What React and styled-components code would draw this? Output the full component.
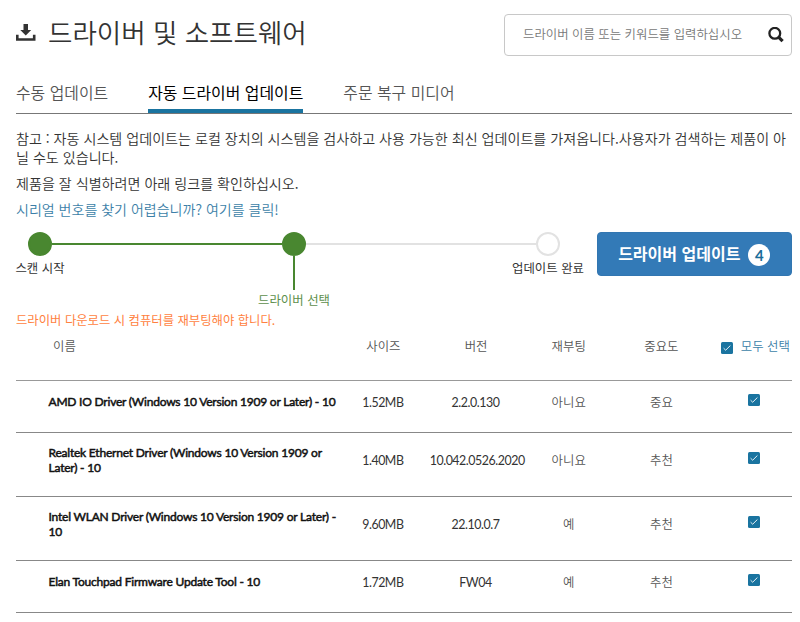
import React, { useState } from 'react';
import styled, { createGlobalStyle } from 'styled-components';

const GlobalStyle = createGlobalStyle`
  * {
    box-sizing: border-box;
  }

  body {
    margin: 0;
    background-color: #fff;
    color: #333;
    font-family: "Noto Sans CJK KR", "Noto Sans", sans-serif;
  }
`;

const Container = styled.div`
  width: 800px;
  height: 622px;
  padding: 0 8px 0 16px;
  overflow: hidden;
`;

const Header = styled.header`
  height: 73px;
  padding-top: 14px;
  display: flex;
  justify-content: space-between;
`;

const Title = styled.h1`
  height: 35px;
  margin: 0;
  display: flex;
  align-items: center;
  gap: 12px;
  font-size: 26.5px;
  font-weight: 350;
  line-height: 35px;
  white-space: nowrap;
`;

const Search = styled.div`
  width: 288px;
  height: 42px;
  padding: 0 7px 0 18px;
  display: flex;
  align-items: center;
  justify-content: space-between;
  border: 1px solid #c8c8c8;
  border-radius: 4px;
`;

const SearchInput = styled.input`
  flex: 1;
  min-width: 0;
  height: 36px;
  padding: 0 0 3px;
  border: 0;
  outline: 0;
  background: none;
  font-family: inherit;
  font-size: 12.4px;
  font-weight: 350;

  &::placeholder {
    color: #777;
    opacity: 1;
  }
`;

const Tabs = styled.nav`
  height: 41px;
  display: flex;
  gap: 40px;
  border-bottom: 1px solid #777;
`;

const Tab = styled.a`
  height: 40px;
  font-size: 15.9px;
  font-weight: ${props => (props.$active ? 400 : 350)};
  line-height: 39px;
  color: ${props => (props.$active ? '#000' : '#555')};
  box-shadow: ${props => (props.$active ? 'inset 0 -4px 0 #1a74a0' : 'none')};
  white-space: nowrap;
  cursor: pointer;
`;

const Note = styled.p`
  margin: 0 0 7px;
  font-size: 14.08px;
  font-weight: 350;
  line-height: 19px;
`;

const Info = styled.section`
  height: 118px;
  padding-top: 15px;
`;

const HelpLink = styled.a`
  display: block;
  font-size: 14.03px;
  font-weight: 350;
  line-height: 19px;
  color: #3c7fa8;
  cursor: pointer;
`;

const Progress = styled.section`
  height: 79px;
  display: flex;
  justify-content: space-between;
`;

const Steps = styled.div`
  width: 568px;
  display: grid;
  grid-template-columns: 48px 194px 72px 1fr 72px;
`;

const Step = styled.div`
  display: flex;
  flex-direction: column;
  align-items: center;
  font-size: 12.4px;
  line-height: 18px;
  white-space: nowrap;
  color: ${props => (props.$current ? '#5d8f4c' : '#333')};
`;

const Dot = styled.span`
  width: 24px;
  height: 24px;
  margin-bottom: ${props => (props.$current ? 0 : 3)}px;
  border: 2px solid ${props => (props.$done ? '#498730' : '#e2e2e2')};
  border-radius: 50%;
  background-color: ${props => (props.$done ? '#498730' : '#fff')};
`;

const Track = styled.span`
  height: 2px;
  margin: 11px ${props => props.$right}px 0 ${props => props.$left}px;
  background-color: ${props => (props.$done ? '#498730' : '#e2e2e2')};
`;

const Stem = styled.span`
  width: 1.5px;
  height: 34px;
  margin-bottom: 1px;
  background-color: #498730;
`;

const UpdateButton = styled.button`
  width: 195.5px;
  height: 44px;
  padding: 0;
  display: flex;
  align-items: center;
  justify-content: center;
  gap: 8px;
  border: 1px solid #3276b1;
  border-radius: 4px;
  background-color: #337ab7;
  color: #fff;
  font-family: inherit;
  font-size: 16px;
  font-weight: 700;
  line-height: 36px;
  white-space: nowrap;
  cursor: pointer;
`;

const ButtonText = styled.span`
  padding-bottom: 3px;
`;

const Count = styled.b`
  width: 22px;
  height: 22px;
  margin-top: 2px;
  border-radius: 50%;
  background-color: #fff;
  color: #1a6d99;
  font-family: Lato, sans-serif;
  font-size: 15px;
  font-weight: 700;
  line-height: 22px;
  text-align: center;
`;

const Warning = styled.p`
  height: 18px;
  margin: 0;
  font-size: 12.35px;
  font-weight: 400;
  line-height: 19px;
  color: #ff7f40;
`;

const Row = styled.div`
  height: ${props => props.$height}px;
  padding-bottom: 8px;
  display: grid;
  grid-template-columns: 321px repeat(4, 92.7px) 1fr;
  align-items: center;
  border-bottom: 1px solid #888;
`;

const HeadRow = styled(Row)`
  height: 52px;
  padding: 8px 0 0;
  align-items: start;
  border-bottom: 1px solid #999;
`;

const Cell = styled.div`
  padding-right: 1px;
  font-family: Lato, sans-serif;
  font-size: 12.4px;
  font-weight: 400;
  line-height: 18px;
  letter-spacing: -0.45px;
  text-align: center;
  white-space: nowrap;
  color: #333;
`;

const KoreanCell = styled(Cell)`
  padding-right: 0;
  padding-bottom: 2px;
  font-family: "Noto Sans CJK KR", sans-serif;
  font-weight: 350;
  letter-spacing: 0;
  color: #555;
`;

const HeadName = styled(KoreanCell)`
  padding-left: 37px;
  text-align: left;
`;

const Name = styled.div`
  padding-left: 32.5px;
  padding-bottom: 2px;
  font-family: Lato, sans-serif;
  font-size: 12px;
  font-weight: 400;
  line-height: 15px;
  letter-spacing: -0.21px;
  -webkit-text-stroke: 0.5px #111;
  color: #111;
`;

const CheckCell = styled.div`
  padding: 0 0 5px 40px;
  display: flex;
`;

const SelectAll = styled.div`
  padding-left: 13px;
  display: flex;
  align-items: center;
  gap: 8px;
  font-size: 12.4px;
  font-weight: 350;
  line-height: 19px;
  white-space: nowrap;
  color: #3c7fa8;
`;

const Check = styled.button`
  width: 12px;
  height: 12px;
  margin-top: ${props => props.$top || 0}px;
  padding: 0;
  display: flex;
  border: 0;
  border-radius: 1.5px;
  background-color: ${props => (props.$checked ? '#1a74a0' : '#fff')};
  cursor: pointer;
`;

const drivers = [
  { name: 'AMD IO Driver (Windows 10 Version 1909 or Later) - 10', size: '1.52MB', version: '2.2.0.130', reboot: '아니요', level: '중요', height: 52 },
  { name: 'Realtek Ethernet Driver (Windows 10 Version 1909 or Later) - 10', size: '1.40MB', version: '10.042.0526.2020', reboot: '아니요', level: '추천', height: 64 },
  { name: 'Intel WLAN Driver (Windows 10 Version 1909 or Later) - 10', size: '9.60MB', version: '22.10.0.7', reboot: '예', level: '추천', height: 64 },
  { name: 'Elan Touchpad Firmware Update Tool - 10', size: '1.72MB', version: 'FW04', reboot: '예', level: '추천', height: 52 },
];

const DownloadIcon = () => (
  <svg width="20" height="20" viewBox="0 0 20 20" fill="#333">
    <path d="M7.5 2h4.5v6h3.2L9.75 13.5 4.3 8h3.2z" />
    <path d="M0 12.8h2.6v3.4h14.3v-3.4h2.6v6H0z" />
  </svg>
);

const SearchIcon = () => (
  <svg width="16" height="16" viewBox="0 0 16 16" fill="none" stroke="#222">
    <circle cx="6.8" cy="6.3" r="5.4" strokeWidth="2.3" />
    <path d="M10.8 10.3l3.8 3.8" strokeWidth="3.2" />
  </svg>
);

const CheckBox = ({ checked, onClick, top }) => (
  <Check type="button" $checked={checked} $top={top} onClick={onClick}>
    <svg width="12" height="12" viewBox="0 0 12 12" fill="none" stroke="#fff">
      <path d="M2.6 6.2l2.1 2 4.7-4.7" strokeWidth="0.9" />
    </svg>
  </Check>
);

const App = () => {
  const [selected, setSelected] = useState(drivers.map(() => true));
  const [keyword, setKeyword] = useState('');

  const count = selected.filter(Boolean).length;
  const allSelected = count === drivers.length;

  const handleToggle = (index) => {
    setSelected(selected.map((value, i) => (i === index ? !value : value)));
  };

  const handleToggleAll = () => {
    setSelected(drivers.map(() => !allSelected));
  };

  return (
    <Container lang="ko">
      <GlobalStyle />
      <Header>
        <Title><DownloadIcon />드라이버 및 소프트웨어</Title>
        <Search>
          <SearchInput
            value={keyword}
            onChange={(e) => setKeyword(e.target.value)}
            placeholder="드라이버 이름 또는 키워드를 입력하십시오"
          />
          <SearchIcon />
        </Search>
      </Header>
      <Tabs>
        <Tab>수동 업데이트</Tab>
        <Tab $active>자동 드라이버 업데이트</Tab>
        <Tab>주문 복구 미디어</Tab>
      </Tabs>
      <Info>
        <Note>참고 : 자동 시스템 업데이트는 로컬 장치의 시스템을 검사하고 사용 가능한 최신 업데이트를 가져옵니다.사용자가 검색하는 제품이 아닐 수도 있습니다.</Note>
        <Note>제품을 잘 식별하려면 아래 링크를 확인하십시오.</Note>
        <HelpLink>시리얼 번호를 찾기 어렵습니까? 여기를 클릭!</HelpLink>
      </Info>
      <Progress>
        <Steps>
          <Step><Dot $done />스캔 시작</Step>
          <Track $done $left={-12} $right={-24} />
          <Step $current><Dot $done $current /><Stem />드라이버 선택</Step>
          <Track $left={-24} $right={-24} />
          <Step><Dot />업데이트 완료</Step>
        </Steps>
        <UpdateButton><ButtonText>드라이버 업데이트</ButtonText><Count>{count}</Count></UpdateButton>
      </Progress>
      <Warning>드라이버 다운로드 시 컴퓨터를 재부팅해야 합니다.</Warning>
      <HeadRow>
        <HeadName>이름</HeadName>
        <KoreanCell>사이즈</KoreanCell>
        <KoreanCell>버전</KoreanCell>
        <KoreanCell>재부팅</KoreanCell>
        <KoreanCell>중요도</KoreanCell>
        <SelectAll><CheckBox top={3} checked={allSelected} onClick={handleToggleAll} />모두 선택</SelectAll>
      </HeadRow>
      {drivers.map((driver, index) => (
        <Row key={driver.name} $height={driver.height}>
          <Name>{driver.name}</Name>
          <Cell>{driver.size}</Cell>
          <Cell>{driver.version}</Cell>
          <KoreanCell>{driver.reboot}</KoreanCell>
          <KoreanCell>{driver.level}</KoreanCell>
          <CheckCell>
            <CheckBox checked={selected[index]} onClick={() => handleToggle(index)} />
          </CheckCell>
        </Row>
      ))}
    </Container>
  );
};

export default App;
